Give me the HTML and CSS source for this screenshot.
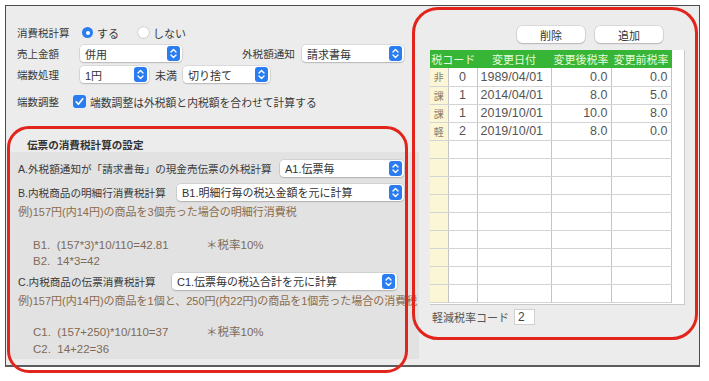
FILE: index.html
```html
<!DOCTYPE html>
<html lang="ja">
<head>
<meta charset="utf-8">
<title>消費税設定</title>
<link rel="stylesheet" href="styles.css">
</head>
<body>
<div class="window">
  <div class="left">
    <div class="row">
      <span class="lbl">消費税計算</span>
      <span class="radio on"></span><span class="rtext">する</span>
      <span class="radio off second"></span><span class="rtext">しない</span>
    </div>
    <div class="row">
      <span class="lbl">売上金額</span>
      <div class="select s-sales"><span>併用</span><svg class="step" width="13" height="15" viewBox="0 0 13 15"><rect width="13" height="15" rx="3" fill="#2a7cf1"/><path d="M4 6 6.5 3.6 9 6M4 9 6.5 11.4 9 9" fill="none" stroke="#fff" stroke-width="1.4" stroke-linecap="round" stroke-linejoin="round"/></svg></div>
      <span class="lbl2">外税額通知</span>
      <div class="select s-notice"><span>請求書毎</span><svg class="step" width="13" height="15" viewBox="0 0 13 15"><rect width="13" height="15" rx="3" fill="#2a7cf1"/><path d="M4 6 6.5 3.6 9 6M4 9 6.5 11.4 9 9" fill="none" stroke="#fff" stroke-width="1.4" stroke-linecap="round" stroke-linejoin="round"/></svg></div>
    </div>
    <div class="row">
      <span class="lbl">端数処理</span>
      <div class="select s-yen"><span>1円</span><svg class="step" width="13" height="15" viewBox="0 0 13 15"><rect width="13" height="15" rx="3" fill="#2a7cf1"/><path d="M4 6 6.5 3.6 9 6M4 9 6.5 11.4 9 9" fill="none" stroke="#fff" stroke-width="1.4" stroke-linecap="round" stroke-linejoin="round"/></svg></div>
      <span class="mid">未満</span>
      <div class="select s-round"><span>切り捨て</span><svg class="step" width="13" height="15" viewBox="0 0 13 15"><rect width="13" height="15" rx="3" fill="#2a7cf1"/><path d="M4 6 6.5 3.6 9 6M4 9 6.5 11.4 9 9" fill="none" stroke="#fff" stroke-width="1.4" stroke-linecap="round" stroke-linejoin="round"/></svg></div>
    </div>
    <div class="row row-check">
      <span class="lbl lbl-short">端数調整</span>
      <svg class="check" width="13" height="13" viewBox="0 0 13 13"><rect width="13" height="13" rx="3" fill="#2a7cf1"/><path d="M3.2 6.8 5.4 9.2 9.8 3.8" fill="none" stroke="#fff" stroke-width="1.7" stroke-linecap="round" stroke-linejoin="round"/></svg>
      <span class="ctext">端数調整は外税額と内税額を合わせて計算する</span>
    </div>

    <div class="gtitle">伝票の消費税計算の設定</div>
    <div class="group">
      <div class="grow g-a">
        <span class="glbl w-a">A.外税額通知が「請求書毎」の現金売伝票の外税計算</span>
        <div class="select s-a"><span>A1.伝票毎</span><svg class="step" width="13" height="15" viewBox="0 0 13 15"><rect width="13" height="15" rx="3" fill="#2a7cf1"/><path d="M4 6 6.5 3.6 9 6M4 9 6.5 11.4 9 9" fill="none" stroke="#fff" stroke-width="1.4" stroke-linecap="round" stroke-linejoin="round"/></svg></div>
      </div>
      <div class="grow g-b">
        <span class="glbl w-b">B.内税商品の明細行消費税計算</span>
        <div class="select s-b"><span>B1.明細行毎の税込金額を元に計算</span><svg class="step" width="13" height="15" viewBox="0 0 13 15"><rect width="13" height="15" rx="3" fill="#2a7cf1"/><path d="M4 6 6.5 3.6 9 6M4 9 6.5 11.4 9 9" fill="none" stroke="#fff" stroke-width="1.4" stroke-linecap="round" stroke-linejoin="round"/></svg></div>
      </div>
      <div class="ex">例)157円(内14円)の商品を3個売った場合の明細行消費税</div>
      <div class="calc c-first"><span class="formula">B1.&nbsp;&nbsp;(157*3)*10/110=42.81</span><span>＊税率10%</span></div>
      <div class="calc"><span class="formula">B2.&nbsp;&nbsp;14*3=42</span></div>
      <div class="grow g-c">
        <span class="glbl w-c">C.内税商品の伝票消費税計算</span>
        <div class="select s-c"><span>C1.伝票毎の税込合計を元に計算</span><svg class="step" width="13" height="15" viewBox="0 0 13 15"><rect width="13" height="15" rx="3" fill="#2a7cf1"/><path d="M4 6 6.5 3.6 9 6M4 9 6.5 11.4 9 9" fill="none" stroke="#fff" stroke-width="1.4" stroke-linecap="round" stroke-linejoin="round"/></svg></div>
      </div>
      <div class="ex">例)157円(内14円)の商品を1個と、250円(内22円)の商品を1個売った場合の消費税</div>
      <div class="calc c-second"><span class="formula">C1.&nbsp;&nbsp;(157+250)*10/110=37</span><span>＊税率10%</span></div>
      <div class="calc"><span class="formula">C2.&nbsp;&nbsp;14+22=36</span></div>
    </div>
  </div>

  <div class="right">
    <div class="btns">
      <div class="btn">削除</div>
      <div class="btn">追加</div>
    </div>
    <div class="tablebox">
      <table>
        <colgroup><col class="c1"><col class="c2"><col class="c3"><col class="c4"><col class="c5"></colgroup>
        <thead>
          <tr><th colspan="2">税コード</th><th>変更日付</th><th>変更後税率</th><th>変更前税率</th></tr>
        </thead>
        <tbody>
          <tr><td class="k">非</td><td class="c">0</td><td>1989/04/01</td><td class="r">0.0</td><td class="r">0.0</td></tr>
          <tr><td class="k">課</td><td class="c">1</td><td>2014/04/01</td><td class="r">8.0</td><td class="r">5.0</td></tr>
          <tr><td class="k">課</td><td class="c">1</td><td>2019/10/01</td><td class="r">10.0</td><td class="r">8.0</td></tr>
          <tr><td class="k">軽</td><td class="c">2</td><td>2019/10/01</td><td class="r">8.0</td><td class="r">0.0</td></tr>
          <tr><td class="k"></td><td></td><td></td><td></td><td></td></tr>
          <tr><td class="k"></td><td></td><td></td><td></td><td></td></tr>
          <tr><td class="k"></td><td></td><td></td><td></td><td></td></tr>
          <tr><td class="k"></td><td></td><td></td><td></td><td></td></tr>
          <tr><td class="k"></td><td></td><td></td><td></td><td></td></tr>
          <tr><td class="k"></td><td></td><td></td><td></td><td></td></tr>
          <tr><td class="k"></td><td></td><td></td><td></td><td></td></tr>
          <tr><td class="k"></td><td></td><td></td><td></td><td></td></tr>
          <tr><td class="k"></td><td></td><td></td><td></td><td></td></tr>
        </tbody>
      </table>
    </div>
    <div class="reduced">
      <span class="rlbl">軽減税率コード</span>
      <span class="input">2</span>
    </div>
  </div>
</div>
<div class="mark mark-left"></div>
<div class="mark mark-right"></div>
</body>
</html>
```

FILE: styles.css
```css
* { box-sizing: border-box; }
html, body { margin: 0; padding: 0; background: #fff; }
body {
  position: relative;
  width: 709px;
  height: 381px;
  overflow: hidden;
  font-family: "Liberation Sans", "Noto Sans CJK JP", sans-serif;
  font-size: 11px;
  color: #3a3a3a;
}
.window {
  margin: 5px 0 0 5px;
  width: 695px;
  height: 362px;
  background: #ececec;
  border-top: 1px solid #4d4d4d;
  border-left: 1px solid #4d4d4d;
  border-right: 1px solid #4d4d4d;
  border-bottom: 2px solid #5c5c5c;
  display: flex;
}
.left {
  width: 413px;
  padding-top: 16px;
  display: flex;
  flex-direction: column;
}
.row {
  height: 21px;
  display: flex;
  align-items: center;
  padding-left: 11px;
  white-space: nowrap;
}
.lbl { width: 63px; font-size: 10.5px; }
.lbl-short { width: 56px; }
.radio {
  width: 11px;
  height: 11px;
  border-radius: 50%;
  margin-left: 2px;
  flex: none;
}
.radio.on {
  background: #2a7cf1;
  display: flex;
  align-items: center;
  justify-content: center;
}
.radio.on::after {
  content: "";
  width: 4px;
  height: 4px;
  border-radius: 50%;
  background: #fff;
}
.radio.off {
  background: #fff;
  box-shadow: 0 0 0 0.5px rgba(0,0,0,0.2), 0 0.5px 1px rgba(0,0,0,0.12);
}
.radio.second { margin-left: 19px; }
.rtext { margin-left: 4px; width: 22px; }
.select {
  height: 17px;
  background: #fff;
  border-radius: 4px;
  box-shadow: 0 0 0 0.5px rgba(0,0,0,0.14), 0 1px 1.5px rgba(0,0,0,0.16);
  display: flex;
  align-items: center;
  justify-content: space-between;
  padding: 0 2px 0 5px;
  flex: none;
  color: #333;
  white-space: nowrap;
}
.step { flex: none; display: block; }
.s-sales { width: 102px; }
.lbl2 { margin-left: 60px; width: 60px; font-size: 10.6px; }
.s-notice { width: 102px; }
.s-yen { width: 69px; }
.mid { margin-left: 6px; width: 22px; }
.s-round { margin-left: 6px; width: 87px; }
.row-check { margin-top: 6px; }
.check { flex: none; display: block; }
.ctext { margin-left: 4px; font-size: 10.8px; }

.gtitle {
  margin-top: 26px;
  height: 14px;
  line-height: 14px;
  padding-left: 21px;
  font-weight: bold;
  font-size: 10.6px;
  color: #333;
}
.group {
  margin-left: 2px;
  width: 411px;
  height: 207px;
  background: #e2e2e2;
  padding: 4px 15px 0 10px;
  overflow: hidden;
  white-space: nowrap;
}
.grow {
  height: 24px;
  display: flex;
  align-items: center;
}
.glbl { flex: none; font-size: 10.6px; }
.w-a { width: 262px; }
.w-b { width: 159px; }
.w-c { width: 154px; }
.s-a { width: 124px; }
.s-b { width: 227px; }
.s-c { width: 225px; }
.ex {
  height: 16px;
  line-height: 16px;
  color: #8a6b4b;
}
.calc {
  height: 16px;
  line-height: 16px;
  padding-left: 15px;
  color: #7e6a56;
  font-size: 11.5px;
  display: flex;
}
.formula { width: 173px; }
.c-first { margin-top: 17px; }
.c-second { margin-top: 15px; height: 17px; }

.right {
  flex: 1;
  padding: 20px 0 0 11px;
}
.btns {
  width: 255px;
  display: flex;
  justify-content: flex-end;
  gap: 10px;
  padding-right: 22px;
}
.btn {
  width: 68px;
  height: 17px;
  background: #fff;
  border-radius: 5px;
  box-shadow: 0 0 0 0.5px rgba(0,0,0,0.16), 0 1px 1.5px rgba(0,0,0,0.16);
  display: flex;
  align-items: center;
  justify-content: center;
  color: #333;
}
.tablebox {
  margin-top: 7px;
  width: 255px;
  height: 255px;
  background: #fff;
  border: 1px solid #c9c9c9;
  border-top: none;
  border-left: none;
  overflow: hidden;
}
table {
  border-collapse: collapse;
  table-layout: fixed;
  width: 241px;
}
col.c1 { width: 18px; }
col.c2 { width: 29px; }
col.c3 { width: 74px; }
col.c4 { width: 60px; }
col.c5 { width: 60px; }
th {
  height: 18px;
  padding: 0;
  background: #36b536;
  color: #e6fbdc;
  font-weight: normal;
  font-size: 11px;
  border-right: 1px solid #36b536;
}
tbody tr { height: 18px; }
td {
  padding: 0 3px;
  height: 18px;
  border-right: 1px solid #c4c4c4;
  border-bottom: 1px solid #d4d4d4;
  font-size: 12.5px;
  color: #555;
  white-space: nowrap;
}
td.k {
  background: #fbf6d6;
  font-size: 10px;
  color: #8d806a;
  text-align: center;
  padding: 0;
}
td.c { text-align: center; }
td.r { text-align: right; }
.reduced {
  margin-top: 4px;
  height: 16px;
  display: flex;
  align-items: center;
}
.rlbl { margin-left: 2px; width: 82px; color: #555; }
.input {
  width: 21px;
  height: 16px;
  background: #fff;
  border: 1px solid #d0d0d0;
  padding-left: 3px;
  font-size: 12px;
  line-height: 14px;
  color: #444;
}
.mark {
  position: absolute;
  border: 3px solid #e2251c;
  pointer-events: none;
}
.mark-left {
  left: 7px;
  top: 126px;
  width: 401px;
  height: 247px;
  border-radius: 22px;
}
.mark-right {
  left: 412px;
  top: 7px;
  width: 286px;
  height: 333px;
  border-radius: 26px;
}
```
